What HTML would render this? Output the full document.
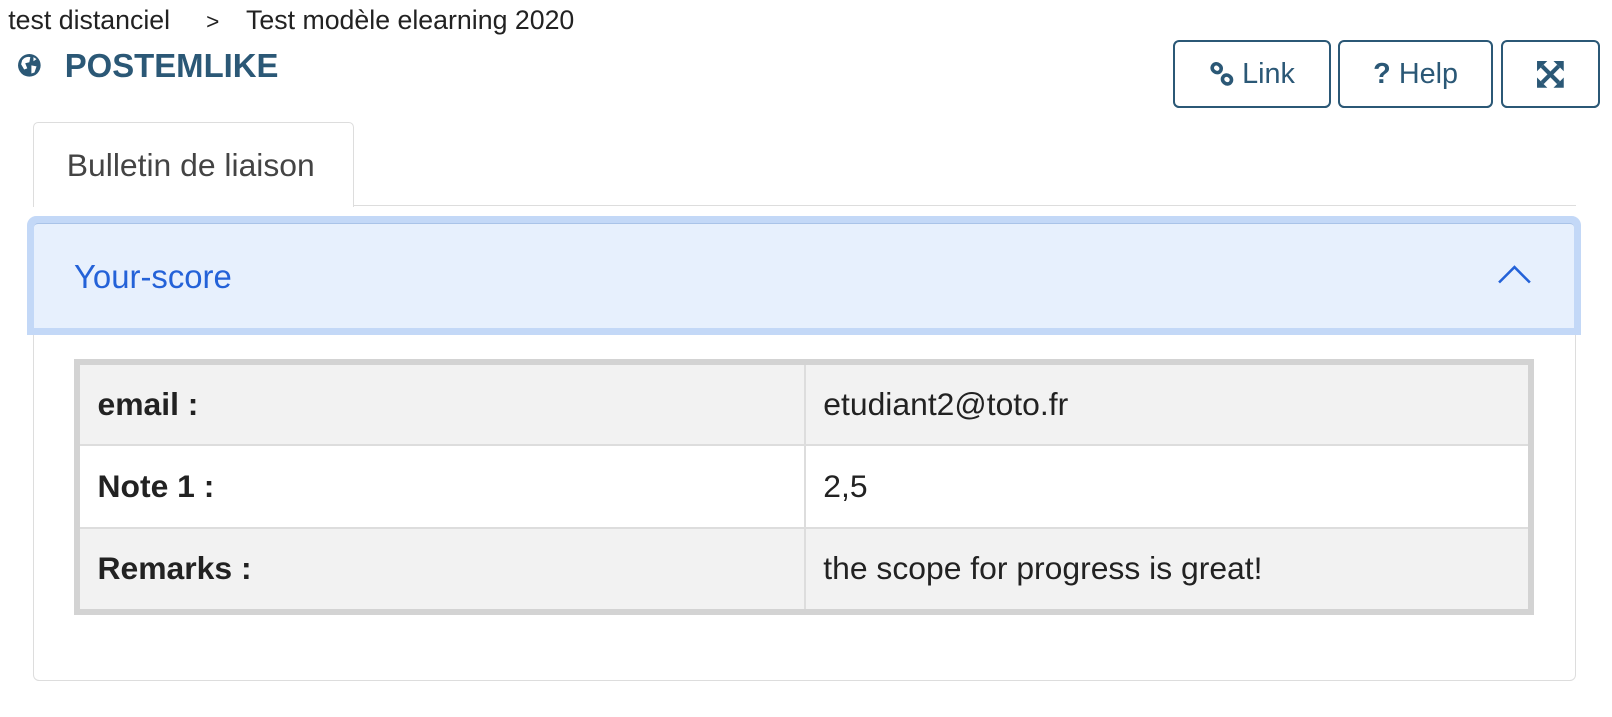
<!DOCTYPE html>
<html><head><meta charset="utf-8"><style>
body{margin:0;width:1612px;height:716px;background:#fff;font-family:"Liberation Sans",sans-serif;overflow:hidden}
#w{position:relative;zoom:1.028;width:1568px;height:697px}
.a{position:absolute}
.bc{left:8px;top:5px;font-size:26px;line-height:30px;color:#222;white-space:nowrap}
.title{left:63px;top:45px;font-size:32px;line-height:38px;font-weight:bold;color:#2b5876}
.btn{border:2px solid #2b5876;border-radius:6px;box-sizing:border-box;color:#2b5876;font-size:28px;display:flex;align-items:center;justify-content:center;top:39px;height:66px}
.tab{left:32px;top:119px;width:312px;height:82px;border:1px solid #ddd;border-bottom:none;border-radius:5px 5px 0 0;box-sizing:border-box;background:#fff;font-size:31px;line-height:36px;color:#444;padding:23px 0 0 32px;white-space:nowrap}
.line{left:32px;top:199px;width:1501px;height:1px;background:#ddd}
.box{left:32px;top:216px;width:1501px;height:446px;border:1px solid #ddd;border-radius:6px;box-sizing:border-box}
.hdr{left:26px;top:210px;width:1512px;height:116px;background:#c3d8f7;border-radius:9px 9px 0 0}
.hdr2{left:33px;top:217px;width:1498px;height:102px;background:#e7f0fd;border-radius:4px 4px 0 0;border-top:1px solid #a9c3e8;box-sizing:border-box}
.ys{left:72px;top:251px;font-size:32px;line-height:36px;color:#2462d8}
table{position:absolute;left:72px;top:349px;width:1420px;border-collapse:collapse;border:6px solid #d3d3d3;font-size:31px;color:#222}
td{border:2px solid #ddd;height:81px;padding:0 0 0 17px;box-sizing:border-box}
tr.g td{background:#f2f2f2}
b{font-weight:bold}
</style></head><body><div id="w">
<div class="a bc">test distanciel<span style="font-size:22px;margin:0 26px 0 35px">&gt;</span>Test modèle elearning 2020</div>
<svg class="a" style="left:17px;top:52px" width="24" height="24" viewBox="0 0 24 24"><circle cx="12" cy="12" r="11" fill="#2b5876"/><path d="M5 7 Q8 3 13 4 L12 9 L8 10 L10 15 L7 16 L4 11 Z M14 12 L19 13 L17 19 L14 20 Z M16 4 L19 6 L16 8Z" fill="#fff"/></svg>
<div class="a title">POSTEMLIKE</div>
<div class="a btn" style="left:1141px;width:154px"><svg width="26" height="26" viewBox="0 0 26 26" style="margin-right:6px"><g fill="none" stroke="#2b5876" stroke-width="3.5"><rect x="3" y="3" width="9" height="8" rx="4" transform="rotate(40 7.5 7)"/><rect x="13" y="14" width="9" height="8" rx="4" transform="rotate(40 17.5 18)"/></g></svg>Link</div>
<div class="a btn" style="left:1302px;width:150px"><b style="margin-right:8px">?</b>Help</div>
<div class="a btn" style="left:1460px;width:96px"><svg width="28" height="28" viewBox="0 0 28 28"><g stroke="#2b5876" stroke-width="4"><line x1="6" y1="6" x2="22" y2="22"/><line x1="22" y1="6" x2="6" y2="22"/></g><g fill="#2b5876"><path d="M1 1h10l-10 10z"/><path d="M27 1h-10l10 10z"/><path d="M1 27h10l-10-10z"/><path d="M27 27h-10l10-10z"/></g></svg></div>
<div class="a line"></div>
<div class="a tab">Bulletin de liaison</div>
<div class="a box"></div>
<div class="a hdr"></div>
<div class="a hdr2"></div>
<div class="a ys">Your-score</div>
<svg class="a" style="left:1456px;top:256px" width="34" height="22" viewBox="0 0 34 22"><path d="M2 19 L17 4 L32 19" fill="none" stroke="#2462d8" stroke-width="2.5"/></svg>
<table>
<tr class="g"><td style="width:708px"><b>email :</b></td><td>etudiant2@toto.fr</td></tr>
<tr><td><b>Note 1 :</b></td><td>2,5</td></tr>
<tr class="g"><td><b>Remarks :</b></td><td>the scope for progress is great!</td></tr>
</table>
</div></body></html>
